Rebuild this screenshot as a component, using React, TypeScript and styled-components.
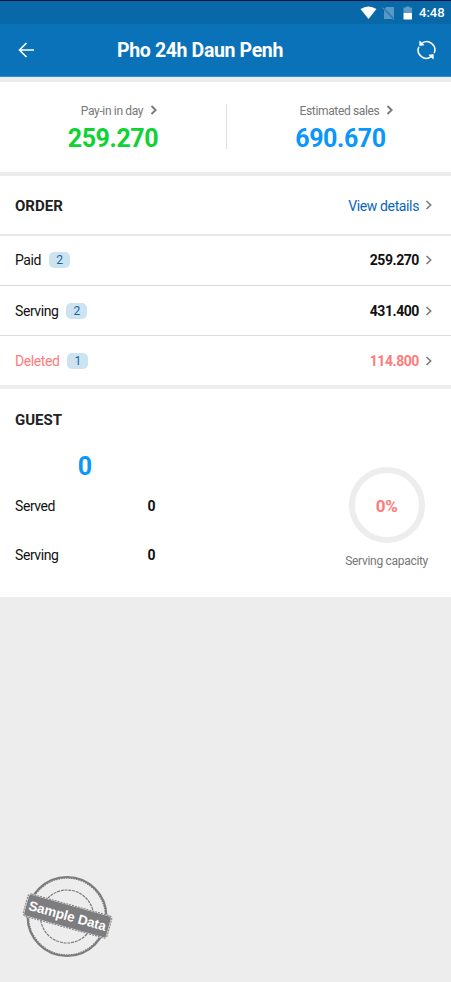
import React from "react";
import styled, { createGlobalStyle } from "styled-components";

const GlobalStyle = createGlobalStyle`
  * { box-sizing: border-box; }
  body { margin: 0; background: #ededed; font-family: Roboto, sans-serif; color: #111; }
`;

const Screen = styled.div`
  display: flex;
  flex-direction: column;
  width: 451px;
  height: 982px;
  overflow: hidden;
  background: #ededed;
`;

const StatusBar = styled.div`
  display: flex;
  align-items: center;
  justify-content: flex-end;
  height: 24px;
  padding-right: 6px;
  border-top: 1px solid #0a1440;
  background: #0868a8;
  color: #fff;
`;

const Clock = styled.span`
  width: 26px;
  font-size: 13px;
  font-weight: 500;
  line-height: 24px;
  white-space: nowrap;
`;

const Header = styled.header`
  display: grid;
  grid-template-columns: 52px 296px 1fr;
  align-items: center;
  height: 53px;
  border-bottom: 1px solid #3a8dca;
  background: #0a72b9;
  color: #fff;
`;

const HeaderTitle = styled.h1`
  margin: 0;
  padding-top: 2px;
  font-size: 19.5px;
  line-height: 24px;
  font-weight: 700;
  letter-spacing: -0.36px;
  text-align: center;
  white-space: nowrap;
`;

const IconButton = styled.button<{ $end?: boolean }>`
  display: flex;
  justify-content: ${(p) => (p.$end ? "flex-end" : "flex-start")};
  padding: ${(p) => (p.$end ? "0 14px 0 0" : "0 0 0 16px")};
  border: 0;
  background: none;
  color: inherit;
`;

const Summary = styled.section`
  display: grid;
  grid-template-columns: 226px 1px 1fr;
  height: 90px;
  margin-top: 5px;
  padding-top: 22px;
  background: #fff;
`;

const Divider = styled.div`
  height: 45px;
  background: #dedede;
`;

const Metric = styled.div<{ $shift: number }>`
  display: flex;
  flex-direction: column;
  align-items: center;
  padding-left: ${(p) => p.$shift}px;
`;

const MetricLabel = styled.div`
  display: flex;
  align-items: center;
  gap: 7px;
  height: 14px;
  padding-left: 13px;
  font-size: 12px;
  line-height: 14px;
  letter-spacing: -0.35px;
  color: #777;

  svg {
    margin-top: -2px;
  }
`;

const MetricValue = styled.div<{ $color: string }>`
  margin-top: 5px;
  font-size: 25px;
  font-weight: 700;
  line-height: 31px;
  letter-spacing: -0.4px;
  color: ${(p) => p.$color};
`;

const Panel = styled.section<{ $height: number }>`
  height: ${(p) => p.$height}px;
  margin-top: 4px;
  background: #fff;
`;

const PanelHeader = styled.div<{ $height: number; $drop: number }>`
  display: flex;
  align-items: center;
  justify-content: space-between;
  height: ${(p) => p.$height}px;
  padding: ${(p) => p.$drop}px 18px 0 15px;
`;

const Heading = styled.h2`
  margin: 0;
  font-size: 15px;
  font-weight: 700;
  line-height: 20px;
  color: #222;
`;

const DetailsLink = styled.a`
  display: flex;
  align-items: center;
  gap: 6px;
  font-size: 14px;
  line-height: 18px;
  letter-spacing: -0.38px;
  color: #0866c0;

  svg {
    margin-top: -2px;
  }
`;

const OrderRow = styled.div<{ $danger?: boolean; $first?: boolean }>`
  display: flex;
  align-items: center;
  height: ${(p) => (p.$first ? 51 : 50)}px;
  padding: 0 18px ${(p) => (p.$first ? 1 : 0)}px 15px;
  border-top: ${(p) => (p.$first ? "2px solid #e7e7e7" : "1px solid #dcdcdc")};
  font-size: 14px;
  letter-spacing: -0.42px;
  color: ${(p) => (p.$danger ? "#ff7b7b" : "#111")};
`;

const Badge = styled.span`
  width: 21px;
  height: 16px;
  margin-left: 8px;
  border-radius: 5px;
  background: #cce3f2;
  font-size: 12px;
  line-height: 17px;
  letter-spacing: 0;
  text-align: center;
  color: #176399;
`;

const Amount = styled.span`
  margin: 0 6px 0 auto;
  font-size: 14px;
  font-weight: 700;
`;

const GuestBody = styled.div`
  display: flex;
  justify-content: space-between;
  padding: 0 23px 0 15px;
`;

const GuestStats = styled.div`
  width: 140px;
`;

const GuestTotal = styled.div`
  height: 32px;
  font-size: 25px;
  font-weight: 700;
  line-height: 35px;
  text-align: center;
  color: #0a96fa;
`;

const GuestRow = styled.div`
  display: flex;
  align-items: center;
  justify-content: space-between;
  height: 49px;
  font-size: 14px;
  letter-spacing: -0.42px;
`;

const Capacity = styled.div`
  display: flex;
  flex-direction: column;
  align-items: center;
  padding-top: 18px;
`;

const Ring = styled.div`
  display: flex;
  align-items: center;
  justify-content: center;
  width: 76px;
  height: 76px;
  padding-top: 2px;
  border: 6px solid #ededed;
  border-radius: 50%;
  font-size: 17px;
  font-weight: 700;
  letter-spacing: -0.4px;
  color: #ff7b7b;
`;

const CapacityLabel = styled.div`
  margin-top: 11px;
  font-size: 12px;
  line-height: 14px;
  letter-spacing: -0.3px;
  color: #777;
`;

const Stamp = styled.svg`
  margin: auto 0 17px 17px;
  flex: none;
`;

const Chevron = ({ bold }: { bold?: boolean }) => (
  <svg width="8" height="12" viewBox="0 0 8 12" fill="none" stroke="#777" strokeWidth={bold ? 1.8 : 1.5}>
    <path d="M1.5 2 5.7 6 1.5 10" />
  </svg>
);

const StatusIcons = () => (
  <svg width="59" height="22" viewBox="0 0 59 22" fill="#fff">
    <path d="M.5 7Q8.5 2 16.5 7L8.5 17Z" />
    <path d="M26.5 5H34v12H24V7.5Z" opacity=".32" />
    <path d="m22.5 5.5 12 12.5" stroke="#0868a8" strokeWidth="1.8" />
    <path d="m22.2 5.5 12 12.5" stroke="#5c9bc6" strokeWidth="1" />
    <path d="M43.5 5.5H46v-1h3.5v1H52V11h-8.5z" opacity=".35" />
    <path d="M43.5 11H52v6.5h-8.5z" />
  </svg>
);

const BackIcon = () => (
  <svg width="20" height="18" viewBox="0 0 20 18" fill="none" stroke="#fff" strokeWidth="1.6">
    <path d="M18 9H4M10.5 2 3.5 9l7 7" />
  </svg>
);

const RefreshIcon = () => (
  <svg width="21" height="22" viewBox="0 0 21 22" fill="none" stroke="#fff" strokeWidth="1.5">
    <path d="M6 4.1A8.2 8.2 0 0 1 18.1 14.2M15 17.9A8.2 8.2 0 0 1 2.9 7.8" />
    <path d="M3.7 2v4.6l4.4-.7ZM17.3 20v-4.6l-4.4.7Z" fill="#fff" strokeWidth=".6" />
  </svg>
);

const orders = [
  { label: "Paid", count: 2, amount: "259.270" },
  { label: "Serving", count: 2, amount: "431.400" },
  { label: "Deleted", count: 1, amount: "114.800", danger: true },
];

export default function App() {
  return (
    <>
      <GlobalStyle />
      <Screen>
        <StatusBar>
          <StatusIcons />
          <Clock>4:48</Clock>
        </StatusBar>
        <Header>
          <IconButton aria-label="Back"><BackIcon /></IconButton>
          <HeaderTitle>Pho 24h Daun Penh</HeaderTitle>
          <IconButton $end aria-label="Refresh"><RefreshIcon /></IconButton>
        </Header>
        <Summary>
          <Metric $shift={0}>
            <MetricLabel>Pay-in in day <Chevron bold /></MetricLabel>
            <MetricValue $color="#0fd332">259.270</MetricValue>
          </Metric>
          <Divider />
          <Metric $shift={3}>
            <MetricLabel>Estimated sales <Chevron bold /></MetricLabel>
            <MetricValue $color="#0a96fa">690.670</MetricValue>
          </Metric>
        </Summary>
        <Panel $height={209}>
          <PanelHeader $height={58} $drop={2}>
            <Heading>ORDER</Heading>
            <DetailsLink>View details <Chevron /></DetailsLink>
          </PanelHeader>
          {orders.map((o, i) => (
            <OrderRow key={o.label} $danger={o.danger} $first={i === 0}>
              <span>{o.label}</span>
              <Badge>{o.count}</Badge>
              <Amount>{o.amount}</Amount>
              <Chevron />
            </OrderRow>
          ))}
        </Panel>
        <Panel $height={208}>
          <PanelHeader $height={60} $drop={2}><Heading>GUEST</Heading></PanelHeader>
          <GuestBody>
            <GuestStats>
              <GuestTotal>0</GuestTotal>
              <GuestRow><span>Served</span><b>0</b></GuestRow>
              <GuestRow><span>Serving</span><b>0</b></GuestRow>
            </GuestStats>
            <Capacity>
              <Ring>0%</Ring>
              <CapacityLabel>Serving capacity</CapacityLabel>
            </Capacity>
          </GuestBody>
        </Panel>
        <Stamp width="102" height="96" viewBox="17 869 102 96">
          <g fill="none" stroke="#7d7c7e">
            <circle cx="67" cy="916.5" r="39.5" strokeWidth="2" />
            <circle cx="67" cy="916.5" r="38.5" strokeWidth="1.5" strokeDasharray="1.5 1" />
            <circle cx="67" cy="916.5" r="26.5" strokeWidth="1.2" strokeDasharray="3 .8" />
          </g>
          <g transform="rotate(15.5 67.5 916)">
            <rect x="23.5" y="904" width="88" height="24" rx="3" fill="#ededed" />
            <rect x="24" y="904.5" width="87" height="23" rx="3" fill="none" stroke="#7d7c7e" strokeDasharray="2 1" />
            <rect x="25" y="905.2" width="85" height="21.6" rx="2" fill="#7d7c7e" />
            <text x="67.5" y="920.5" textAnchor="middle" textLength="80" fontFamily="Liberation Sans, sans-serif" fontWeight="700" fontSize="13.5" fill="#fff">Sample Data</text>
          </g>
        </Stamp>
      </Screen>
    </>
  );
}
